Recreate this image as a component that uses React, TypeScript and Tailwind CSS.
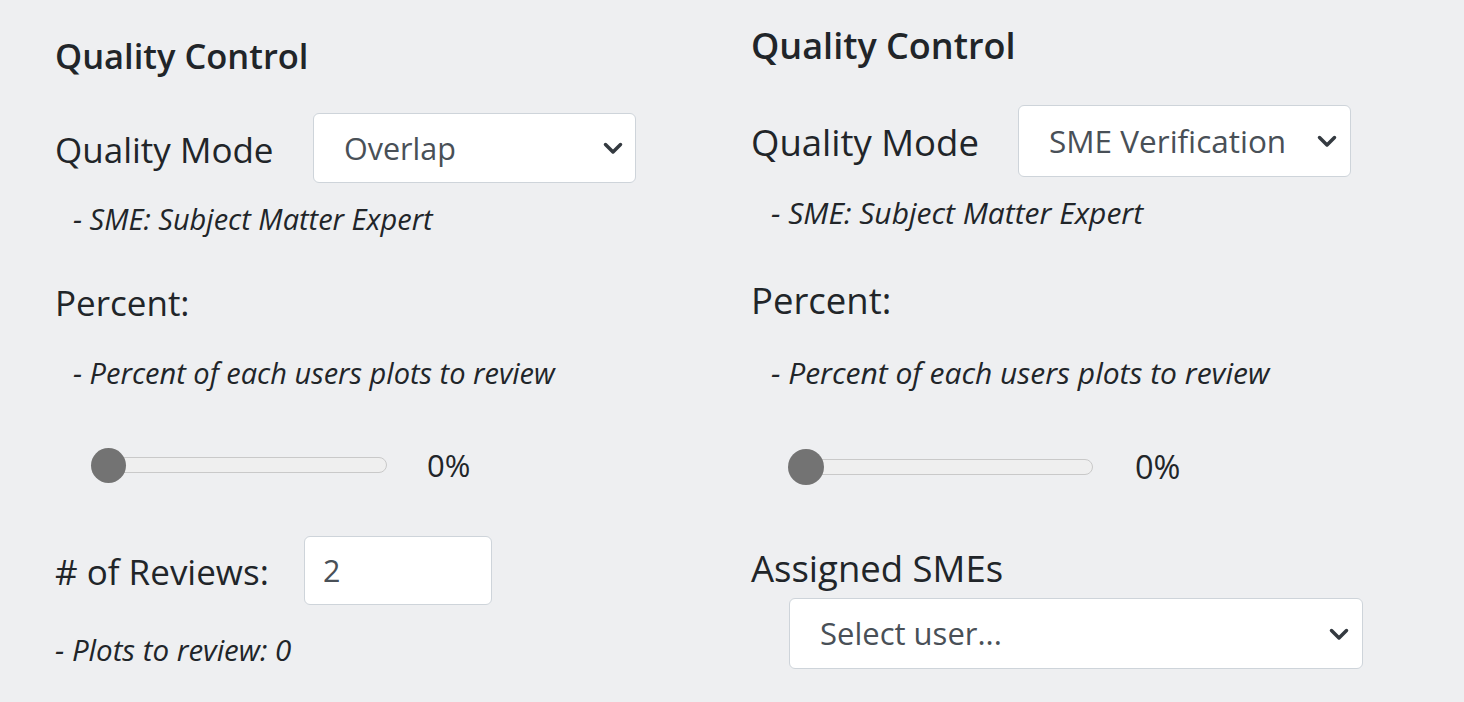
import React from "react";

const font = { fontFamily: '"Open Sans", "Noto Sans", sans-serif' };

function Chevron() {
  return (
    <svg width="22" height="14" viewBox="0 0 22 14" className="shrink-0">
      <path d="M3.5 3.5l7.5 7.5 7.5-7.5" fill="none" stroke="#343a40" strokeWidth="3.5" strokeLinecap="round" strokeLinejoin="round" />
    </svg>
  );
}

function Select({ value, className }: { value: string; className: string }) {
  return (
    <div className={`flex items-center justify-between bg-white border border-[#ced4da] rounded-[6px] text-[#495057] leading-none ${className}`}>
      <span>{value}</span>
      <Chevron />
    </div>
  );
}

function Slider({ width, thumb }: { width: number; thumb: number }) {
  return (
    <div className="relative" style={{ width, height: thumb }}>
      <div
        className="absolute right-0 top-1/2 -translate-y-1/2 h-[16px] rounded-full bg-[#efefef] border border-[#c9c9c9]"
        style={{ left: thumb / 2 }}
      />
      <div className="absolute left-0 top-0 rounded-full bg-[#737373]" style={{ width: thumb, height: thumb }} />
    </div>
  );
}

export default function App() {
  return (
    <div className="w-[1464px] h-[702px] bg-[#eeeff1] text-[#212529] flex overflow-hidden leading-none" style={font}>
      {/* left panel */}
      <div className="w-[696px] pl-[55px] pt-[36px] flex flex-col">
        <div className="h-[40px] flex items-center text-[34.5px] font-semibold">Quality Control</div>
        <div className="mt-[37px] h-[70px] flex items-center">
          <span className="text-[35px] w-[258px] pt-[3px]">Quality Mode</span>
          <Select value="Overlap" className="w-[323px] h-[70px] pl-[30px] pr-[11px] text-[30.5px]" />
        </div>
        <div className="mt-[20px] h-[30px] flex items-center pl-[18px] text-[29px] italic">- SME: Subject Matter Expert</div>
        <div className="mt-[51px] h-[36px] flex items-center text-[35px]">Percent:</div>
        <div className="mt-[37px] h-[30px] flex items-center pl-[18px] text-[29px] italic">
          - Percent of each users plots to review
        </div>
        <div className="mt-[58px] h-[40px] flex items-center pl-[36px]">
          <Slider width={296} thumb={35} />
          <span className="ml-[40px] text-[31px]">0%</span>
        </div>
        <div className="mt-[51px] h-[69px] flex items-center">
          <span className="text-[35px] w-[249px] pt-[1px]"># of Reviews:</span>
          <div className="w-[188px] h-[69px] bg-white border border-[#ced4da] rounded-[6px] flex items-center pl-[18px] text-[30.5px] text-[#495057]">
            2
          </div>
        </div>
        <div className="mt-[30px] h-[30px] flex items-center text-[29.5px] italic">- Plots to review: 0</div>
      </div>

      {/* right panel */}
      <div className="pl-[55px] pt-[26px] flex flex-col">
        <div className="h-[40px] flex items-center text-[36px] font-semibold">Quality Control</div>
        <div className="mt-[39px] h-[72px] flex items-center">
          <span className="text-[36.5px] w-[267px] pt-[2px]">Quality Mode</span>
          <Select value="SME Verification" className="w-[333px] h-[72px] pl-[30px] pr-[12px] text-[31.5px]" />
        </div>
        <div className="mt-[21px] h-[30px] flex items-center pl-[20px] text-[30px] italic">- SME: Subject Matter Expert</div>
        <div className="mt-[54px] h-[36px] flex items-center text-[36.5px]">Percent:</div>
        <div className="mt-[40px] h-[30px] flex items-center pl-[20px] text-[30px] italic">
          - Percent of each users plots to review
        </div>
        <div className="mt-[59px] h-[40px] flex items-center pl-[37px]">
          <Slider width={305} thumb={36} />
          <span className="ml-[42px] text-[32.5px]">0%</span>
        </div>
        <div className="mt-[63px] h-[36px] flex items-center text-[36.5px]">Assigned SMEs</div>
        <div className="mt-[12px] pl-[38px]">
          <Select value="Select user..." className="w-[574px] h-[71px] pl-[30px] pr-[12px] text-[31px]" />
        </div>
      </div>
    </div>
  );
}
